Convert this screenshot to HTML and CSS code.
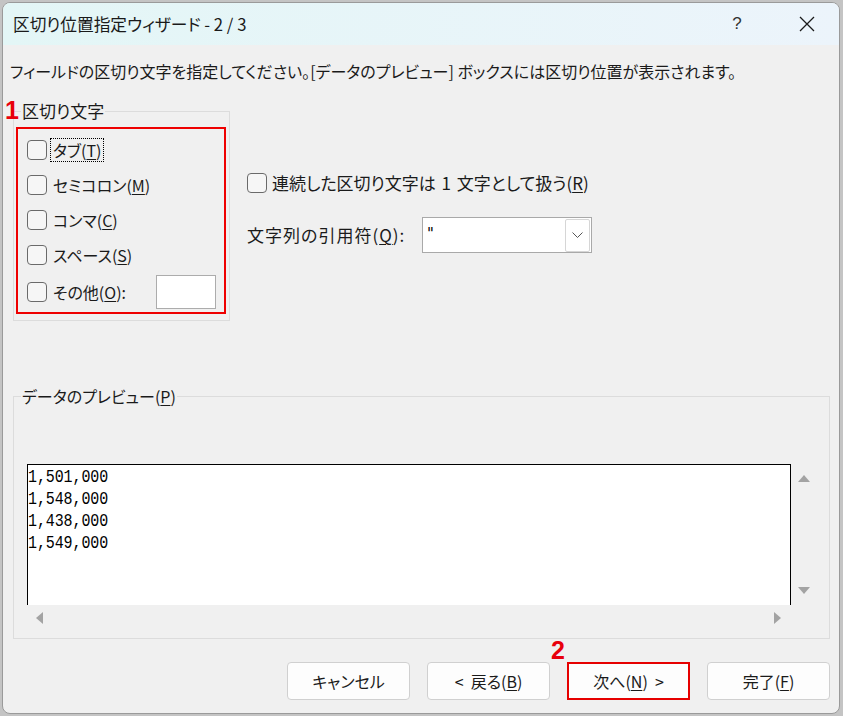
FILE: index.html
```html
<!DOCTYPE html>
<html lang="ja">
<head>
<meta charset="utf-8">
<title>区切り位置指定ウィザード - 2 / 3</title>
<link rel="stylesheet" href="styles.css">
</head>
<body>
<div class="window">
  <div class="titlebar">
    <span class="title">区切り位置指定ウィザード - 2 / 3</span>
    <span class="tb-help">?</span>
    <span class="tb-close">
      <svg width="16" height="16" viewBox="0 0 16 16"><path d="M1 1 L15 15 M15 1 L1 15" stroke="#1a1a1a" stroke-width="1.3" fill="none"/></svg>
    </span>
  </div>
  <div class="content">
    <p class="instr">フィールドの区切り文字を指定してください。[データのプレビュー] ボックスには区切り位置が表示されます。</p>
    <div class="top">
      <span class="marker m1">1</span>
      <fieldset class="group delim">
        <legend>区切り文字</legend>
        <div class="redbox">
          <div class="row"><span class="cb"></span><span class="lbl focus">タブ(<u>T</u>)</span></div>
          <div class="row"><span class="cb"></span><span class="lbl">セミコロン(<u>M</u>)</span></div>
          <div class="row"><span class="cb"></span><span class="lbl">コンマ(<u>C</u>)</span></div>
          <div class="row"><span class="cb"></span><span class="lbl">スペース(<u>S</u>)</span></div>
          <div class="row last"><span class="cb"></span><span class="lbl">その他(<u>O</u>):</span><span class="other-input"></span></div>
        </div>
      </fieldset>
      <div class="opts">
        <div class="opt-row"><span class="cb"></span><span class="opt-lbl">連続した区切り文字は 1 文字として扱う(<u>R</u>)</span></div>
        <div class="quote-row">
          <span class="quote-lbl">文字列の引用符(<u>Q</u>):</span>
          <div class="combo">
            <span class="combo-val">"</span>
            <span class="combo-btn"><svg width="11" height="6" viewBox="0 0 11 6"><polyline points="0.5,0.5 5.5,5.5 10.5,0.5" fill="none" stroke="#555" stroke-width="1"/></svg></span>
          </div>
        </div>
      </div>
    </div>
    <fieldset class="group preview">
      <legend>データのプレビュー(<u>P</u>)</legend>
      <div class="pv-grid">
        <div class="pv-box">
          <div class="pv-line">1,501,000</div>
          <div class="pv-line">1,548,000</div>
          <div class="pv-line">1,438,000</div>
          <div class="pv-line">1,549,000</div>
        </div>
        <div class="vscroll">
          <svg width="12" height="7" viewBox="0 0 12 7"><polygon points="6,0 12,7 0,7" fill="#a3a3a3"/></svg>
          <svg width="12" height="7" viewBox="0 0 12 7"><polygon points="0,0 12,0 6,7" fill="#a3a3a3"/></svg>
        </div>
        <div class="hscroll">
          <svg width="7" height="12" viewBox="0 0 7 12"><polygon points="7,0 7,12 0,6" fill="#a3a3a3"/></svg>
          <svg width="7" height="12" viewBox="0 0 7 12"><polygon points="0,0 7,6 0,12" fill="#a3a3a3"/></svg>
        </div>
      </div>
    </fieldset>
    <div class="buttons">
      <span class="marker m2">2</span>
      <button class="btn">キャンセル</button>
      <button class="btn">&lt;&nbsp; 戻る(<u>B</u>)</button>
      <button class="btn next">次へ(<u>N</u>)&nbsp; &gt;</button>
      <button class="btn">完了(<u>F</u>)</button>
    </div>
  </div>
</div>
</body>
</html>
```
FILE: styles.css
```css
html, body {
  margin: 0;
  padding: 0;
}
body {
  width: 843px;
  height: 716px;
  overflow: hidden;
  background: #c4c4c4;
  font-family: "Noto Sans CJK JP", "Noto Sans", sans-serif;
  font-feature-settings: "palt";
  color: #1a1a1a;
}
.window {
  margin: 2px 0 0 2px;
  width: 838px;
  height: 712px;
  box-sizing: border-box;
  border: 1px solid #9a9a9a;
  border-radius: 8px;
  background: #f0f0f0;
  overflow: hidden;
  display: flex;
  flex-direction: column;
}
.titlebar {
  height: 42px;
  flex: none;
  display: flex;
  align-items: center;
  padding: 0 9px 0 10px;
  background: linear-gradient(90deg, #e3f6f6, #ecf4fb);
}
.title {
  font-size: 16.7px;
  line-height: 20px;
  flex: 1;
  white-space: nowrap;
}
.tb-help {
  width: 46px;
  text-align: center;
  font-family: "Liberation Sans", sans-serif;
  font-size: 17px;
  color: #333;
}
.tb-close {
  width: 46px;
  margin-left: 24px;
  display: flex;
  justify-content: center;
  align-items: center;
}
.content {
  flex: 1;
  padding: 0 9px 0 10px;
}
.instr {
  margin: 16px 0 0 -3px;
  font-size: 16px;
  line-height: 20px;
  height: 20px;
  white-space: nowrap;
}
u {
  text-underline-offset: 2px;
  text-decoration-thickness: 1px;
}
.top {
  display: flex;
  margin-top: 20px;
  position: relative;
}
.marker {
  position: absolute;
  font-family: "Liberation Sans", sans-serif;
  font-weight: bold;
  font-size: 25px;
  line-height: 25px;
  color: #e8000b;
}
.m1 {
  left: -8px;
  top: -3px;
}
.m2 {
  left: 538px;
  top: -24px;
}
.group {
  margin: 0;
  border: 1px solid #dcdcdc;
  min-width: 0;
}
.group legend {
  font-size: 16px;
  line-height: 20px;
  padding: 0 1px;
}
.delim {
  width: 217px;
  box-sizing: border-box;
  padding: 6px 3px 6px 2px;
}
.delim legend {
  margin-left: 5px;
  font-size: 17px;
}
.redbox {
  border: 2px solid #ee0000;
  height: 187px;
  box-sizing: border-box;
  padding: 3px 8px 0 9px;
}
.row {
  display: flex;
  align-items: center;
  height: 35px;
}
.row.last {
  height: 34px;
  margin-top: 3px;
}
.cb {
  width: 20px;
  height: 20px;
  box-sizing: border-box;
  border: 1px solid #6a6a6a;
  border-radius: 4px;
  background: #f6f6f6;
  flex: none;
}
.lbl {
  font-size: 16px;
  line-height: 20px;
  margin-left: 3px;
  padding: 1px 2px;
  border: 1px dotted transparent;
  white-space: nowrap;
}
.lbl.focus {
  border-color: #000;
}
.other-input {
  margin-left: auto;
  width: 60px;
  height: 34px;
  box-sizing: border-box;
  border: 1px solid #acacac;
  background: #fff;
}
.opts {
  margin-left: 17px;
  padding-top: 70px;
  display: flex;
  flex-direction: column;
}
.opt-row {
  display: flex;
  align-items: center;
  height: 24px;
}
.opt-lbl {
  font-size: 17px;
  line-height: 20px;
  margin-left: 5px;
  word-spacing: 2px;
  white-space: nowrap;
}
.quote-row {
  display: flex;
  align-items: center;
  margin-top: 22px;
  height: 36px;
}
.quote-lbl {
  width: 175px;
  font-size: 17px;
  letter-spacing: 1px;
  line-height: 20px;
  white-space: nowrap;
}
.combo {
  width: 170px;
  height: 36px;
  box-sizing: border-box;
  border: 1px solid #a9a9a9;
  background: #fff;
  display: flex;
  align-items: center;
  padding: 1px 1px 1px 4px;
}
.combo-val {
  font-family: "DejaVu Sans", sans-serif;
  font-size: 15px;
  line-height: 20px;
  color: #000;
  flex: 1;
  margin-top: -3px;
}
.combo-btn {
  width: 25px;
  height: 33px;
  box-sizing: border-box;
  border: 1px solid #d6d6d6;
  border-radius: 2px;
  display: flex;
  align-items: center;
  justify-content: center;
}
.preview {
  margin-top: 65px;
  padding: 58px 12px 7px 13px;
}
.preview legend {
  margin-left: -6px;
}
.pv-grid {
  display: grid;
  grid-template-columns: 764px 25px;
  grid-template-rows: 141px 26px;
}
.pv-box {
  background: #fff;
  border: 1px solid #000;
  border-bottom: none;
  padding: 2px 0 0 0;
  font-family: "Liberation Mono", monospace;
  font-size: 15px;
  letter-spacing: -0.1px;
  line-height: 22px;
  color: #000;
}
.pv-line {
  transform: scaleY(1.25);
  transform-origin: left center;
}
.vscroll {
  display: flex;
  flex-direction: column;
  justify-content: space-between;
  align-items: center;
  padding: 11px 0 11px;
}
.hscroll {
  display: flex;
  justify-content: space-between;
  align-items: center;
  padding: 0 10px 0 9px;
}
.buttons {
  position: relative;
  display: flex;
  justify-content: flex-end;
  gap: 17px;
  margin-top: 23px;
}
.btn {
  width: 123px;
  height: 38px;
  box-sizing: border-box;
  border: 1px solid #d0d0d0;
  border-radius: 4px;
  background: #fdfdfd;
  font-family: "Noto Sans CJK JP", "Noto Sans", sans-serif;
  font-feature-settings: "palt";
  font-size: 16px;
  color: #1a1a1a;
  padding: 0;
}
.btn.next {
  border: 2px solid #e60000;
  border-radius: 0;
  background: #fdfdfd;
}
```
